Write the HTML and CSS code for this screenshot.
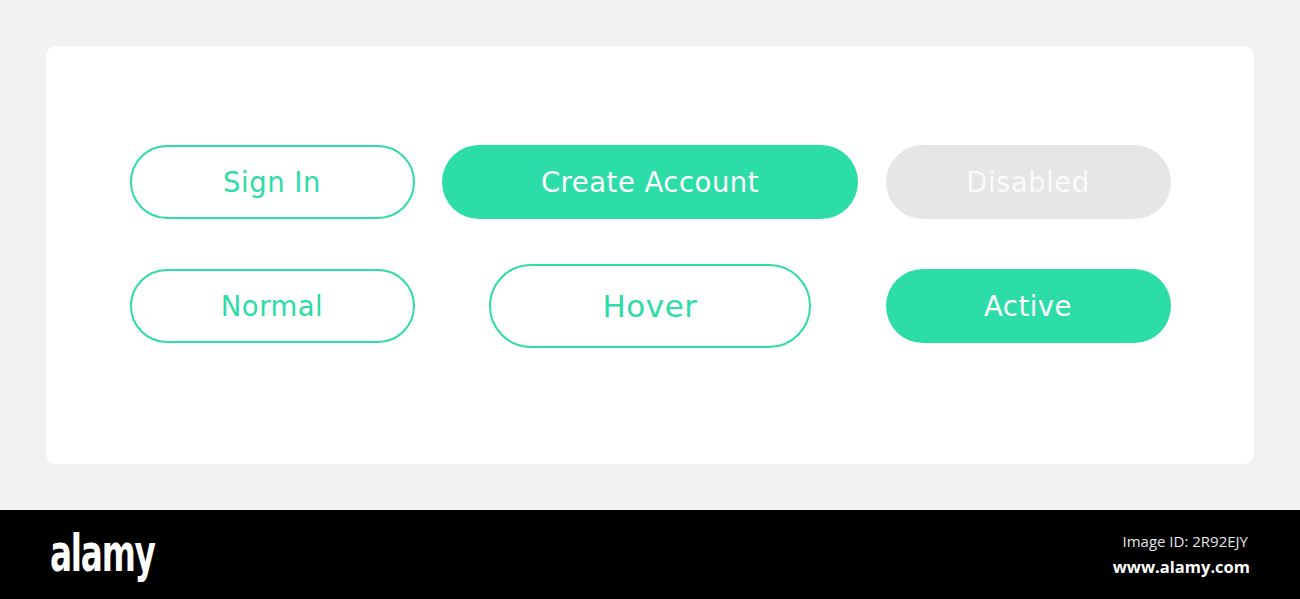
FILE: index.html
```html
<!DOCTYPE html>
<html>
<head>
  <meta charset="UTF-8">
  <title>Button States</title>
  <link rel="stylesheet" href="styles.css">
</head>
<body>
  <div class="stage">
    <div class="card">
      <div class="button-grid">
        <button class="btn btn-outline">Sign In</button>
        <button class="btn btn-filled btn-wide">Create Account</button>
        <button class="btn btn-disabled" disabled>Disabled</button>

        <button class="btn btn-outline">Normal</button>
        <button class="btn btn-outline btn-hover">Hover</button>
        <button class="btn btn-filled">Active</button>
      </div>
    </div>
  </div>

  <footer class="strip">
    <div class="logo"><span class="logo-word">alamy</span></div>
    <div class="meta">
      <div class="image-id">Image ID: 2R92EJY</div>
      <div class="site">www.alamy.com</div>
    </div>
  </footer>
</body>
</html>
```

FILE: styles.css
```css
/* Button states sheet */
body {
  margin: 0;
  padding: 0;
  background-color: #f2f2f2;
  font-family: "DejaVu Sans", "Noto Sans", sans-serif;
}

.stage {
  height: 510px;
  padding: 46px;
  box-sizing: border-box;
}

.card {
  background-color: #fff;
  border-radius: 10px;
  height: 418px;
  box-sizing: border-box;
  padding: 74px 37px 0;
}

.button-grid {
  display: grid;
  grid-template-columns: repeat(3, 378px);
  grid-auto-rows: 124px;
  align-items: center;
  justify-items: center;
}

.btn {
  width: 285px;
  height: 74px;
  border-radius: 37px;
  font-family: "DejaVu Sans", "Noto Sans", sans-serif;
  font-size: 27.5px;
  letter-spacing: 0.5px;
  box-sizing: border-box;
  cursor: pointer;
  padding: 0;
}

.btn-outline {
  background-color: #fff;
  border: 2px solid #2ddca7;
  color: #2ddca7;
}

.btn-filled {
  background-color: #2ddda8;
  border: none;
  color: #fff;
}

.btn-wide {
  width: 416px;
}

.btn-disabled {
  background-color: #e6e6e6;
  border: none;
  color: #fafafa;
  cursor: default;
}

.btn-hover {
  width: 322px;
  height: 84px;
  border-radius: 42px;
  font-size: 31px;
}

/* bottom credit strip */
.strip {
  background-color: #000;
  height: 89px;
  display: flex;
  align-items: center;
  justify-content: space-between;
  padding: 0 50px;
}

.logo {
  width: 104px;
  height: 60px;
  overflow: visible;
  margin-top: -4px;
}

.logo-word {
  display: inline-block;
  color: #fff;
  font-family: "DejaVu Sans", sans-serif;
  font-weight: bold;
  font-size: 52px;
  line-height: 60px;
  letter-spacing: -2px;
  transform: scaleX(0.63);
  transform-origin: left center;
}

.meta {
  text-align: right;
  color: #fff;
  font-family: "Open Sans", "Noto Sans", sans-serif;
}

.image-id {
  font-size: 15px;
  color: #e6e6e6;
  margin-right: 2px;
}

.site {
  font-size: 16.5px;
  font-weight: bold;
  margin-top: 4px;
}
```
